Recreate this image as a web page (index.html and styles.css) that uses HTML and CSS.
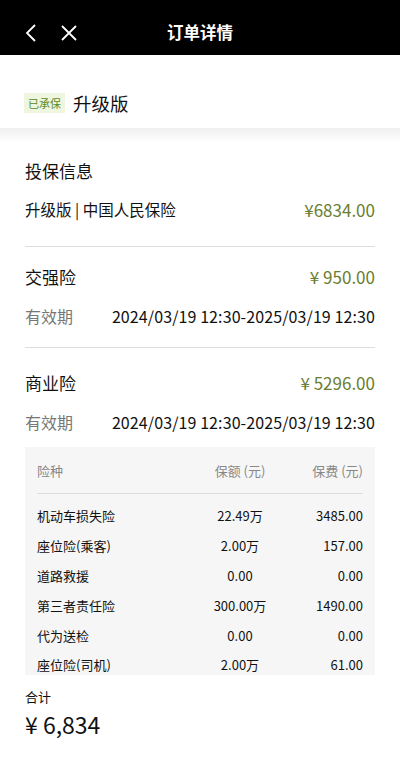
FILE: index.html
```html
<!DOCTYPE html>
<html lang="zh-CN">
<head>
    <meta charset="UTF-8">
    <meta name="viewport" content="width=device-width, initial-scale=1.0">
    <title>订单详情</title>
    <link rel="stylesheet" href="styles.css">
</head>
<body>
    <!-- Barra superior -->
    <div class="topbar">
        <div class="topbar-icons">
            <svg width="14" height="18" viewBox="0 0 14 18"><path d="M11 1 L3 9 L11 17" fill="none" stroke="#fff" stroke-width="1.8"/></svg>
            <svg width="18" height="18" viewBox="0 0 18 18"><path d="M2 2 L16 16 M16 2 L2 16" fill="none" stroke="#fff" stroke-width="1.8"/></svg>
        </div>
        <h1>订单详情</h1>
    </div>

    <div class="status">
        <span class="tag">已承保</span>
        <span class="plan">升级版</span>
    </div>
    <div class="band"></div>

    <div class="content">
        <div class="section">
            <h2>投保信息</h2>
            <div class="row">
                <span class="row-name">升级版 | 中国人民保险</span>
                <span class="price">¥6834.00</span>
            </div>
        </div>

        <div class="section">
            <div class="row title-row">
                <h3>交强险</h3>
                <span class="price">¥ 950.00</span>
            </div>
            <div class="row period">
                <span class="label">有效期</span>
                <span class="dates">2024/03/19 12:30-2025/03/19 12:30</span>
            </div>
        </div>

        <div class="section last">
            <div class="row title-row">
                <h3>商业险</h3>
                <span class="price">¥ 5296.00</span>
            </div>
            <div class="row period">
                <span class="label">有效期</span>
                <span class="dates">2024/03/19 12:30-2025/03/19 12:30</span>
            </div>

            <div class="detail">
                <div class="detail-head">
                    <span>险种</span>
                    <span>保额 (元)</span>
                    <span>保费 (元)</span>
                </div>
                <div class="detail-row"><span>机动车损失险</span><span>22.49万</span><span>3485.00</span></div>
                <div class="detail-row"><span>座位险(乘客)</span><span>2.00万</span><span>157.00</span></div>
                <div class="detail-row"><span>道路救援</span><span>0.00</span><span>0.00</span></div>
                <div class="detail-row"><span>第三者责任险</span><span>300.00万</span><span>1490.00</span></div>
                <div class="detail-row"><span>代为送检</span><span>0.00</span><span>0.00</span></div>
                <div class="detail-row"><span>座位险(司机)</span><span>2.00万</span><span>61.00</span></div>
            </div>
        </div>

        <div class="total">
            <div class="total-label">合计</div>
            <div class="total-value">¥ 6,834</div>
        </div>
    </div>
</body>
</html>
```

FILE: styles.css
```css
/* Estructura general */
body {
    margin: 0;
    font-family: "Noto Sans CJK SC", "Noto Sans", sans-serif;
    color: #111;
    background-color: #fff;
}

.topbar {
    height: 55px;
    box-sizing: border-box;
    padding-top: 8px;
    background-color: #000;
    color: #fff;
    display: flex;
    align-items: center;
    justify-content: center;
    position: relative;
}

.topbar h1 {
    margin: 0;
    font-size: 16.5px;
    font-weight: 700;
}

.topbar-icons {
    position: absolute;
    left: 24px;
    top: 24px;
    display: flex;
    gap: 22px;
}

.status {
    display: flex;
    align-items: center;
    gap: 8px;
    padding: 38px 24px 15px;
}

.tag {
    background-color: #eef6df;
    color: #5b8a2b;
    font-size: 11px;
    padding: 2px 4px;
    line-height: 16px;
}

.plan {
    font-size: 18.5px;
    line-height: 20px;
}

.band {
    height: 14px;
    background: linear-gradient(#efefef, #fff);
}

.content {
    padding: 0 25px;
}

.section {
    border-bottom: 1px solid #ddd;
}

.section.last {
    border-bottom: none;
}

.section h2 {
    margin: 0;
    font-size: 17px;
    font-weight: 400;
    line-height: 24px;
    padding-top: 17px;
}

.section h3 {
    margin: 0;
    font-size: 17px;
    font-weight: 400;
}

.row {
    display: flex;
    justify-content: space-between;
    align-items: center;
}

.section h2 + .row {
    height: 40px;
    margin-top: 6px;
    margin-bottom: 17px;
    font-size: 15.5px;
}

.title-row {
    height: 40px;
    margin-top: 9px;
}

.last .title-row {
    margin-top: 14px;
}

.period {
    height: 40px;
    margin-bottom: 11px;
}

.last .period {
    margin-bottom: 5px;
}

.price {
    color: #6b7d2e;
    font-size: 17px;
}

.label {
    color: #777;
    font-size: 16px;
}

.dates {
    font-size: 16px;
    letter-spacing: 0.1px;
}

.detail {
    background-color: #f6f6f6;
    padding: 0 12px;
    font-size: 13px;
}

.detail-head,
.detail-row {
    display: grid;
    grid-template-columns: 1fr 90px 78px;
    align-items: center;
    height: 30px;
}

.detail-row:last-child {
    height: 25px;
    align-items: start;
    padding-top: 6px;
    line-height: 18px;
    box-sizing: border-box;
}

.detail-head {
    color: #888;
    height: 46px;
    border-bottom: 1px solid #ddd;
    margin-bottom: 6px;
}

.detail-head span:nth-child(2),
.detail-row span:nth-child(2) {
    text-align: center;
}

.detail-head span:nth-child(3),
.detail-row span:nth-child(3) {
    text-align: right;
}

.total {
    padding-top: 12px;
}

.total-label {
    font-size: 13px;
}

.total-value {
    font-size: 23px;
    margin-top: 1px;
}
```
